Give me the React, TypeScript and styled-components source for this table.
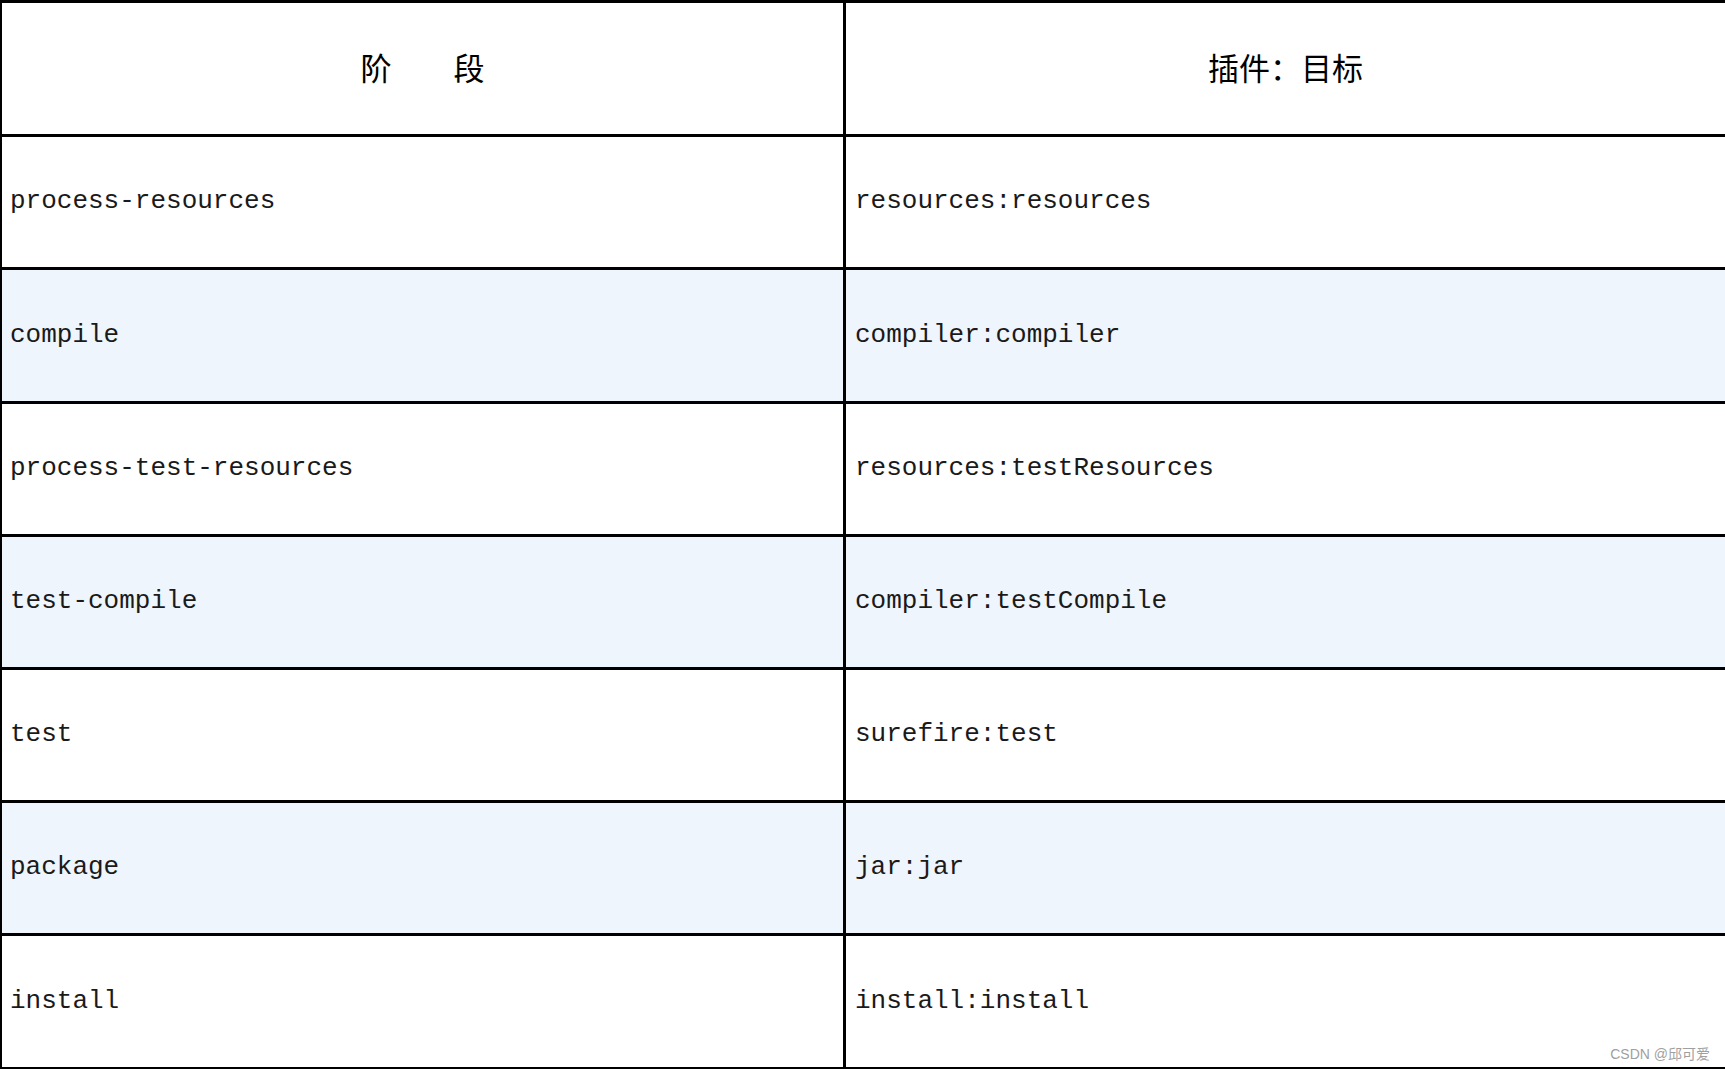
import React from 'react';
import styled, { createGlobalStyle } from 'styled-components';

const GlobalStyle = createGlobalStyle`
  html, body {
    margin: 0;
    padding: 0;
    background: #ffffff;
    overflow: hidden;
  }
`;

interface Phase {
  phase: string;
  goal: string;
}

const phases: Phase[] = [
  { phase: 'process-resources', goal: 'resources:resources' },
  { phase: 'compile', goal: 'compiler:compiler' },
  { phase: 'process-test-resources', goal: 'resources:testResources' },
  { phase: 'test-compile', goal: 'compiler:testCompile' },
  { phase: 'test', goal: 'surefire:test' },
  { phase: 'package', goal: 'jar:jar' },
  { phase: 'install', goal: 'install:install' },
];

const App: React.FC = () => {
  return (
    <>
      <GlobalStyle />
      <Page>
        <Table>
          <Row>
            <HeadCell>阶　　段</HeadCell>
            <HeadCell>插件：目标</HeadCell>
          </Row>
          {phases.map((p, i) => (
            <Row key={p.phase} shaded={i % 2 === 1} last={i === phases.length - 1}>
              <Cell indent={8}>{p.phase}</Cell>
              <Cell indent={9}>{p.goal}</Cell>
            </Row>
          ))}
        </Table>
        <Watermark>CSDN @邱可爱</Watermark>
      </Page>
    </>
  );
};

const Page = styled.div`
  position: relative;
  width: 100vw;
  height: 100vh;
`;

const Table = styled.div`
  box-sizing: border-box;
  display: grid;
  grid-template-rows: 134px 133px 134px 133px 133px 133px 133px 1fr;
  width: 100%;
  height: 100%;
  border-top: 3px solid #000;
  border-left: 2px solid #000;
  border-bottom: 2px solid #000;
`;

const Row = styled.div<{ shaded?: boolean; last?: boolean }>`
  display: grid;
  grid-template-columns: 844px 1fr;
  background: ${(props) => (props.shaded ? '#eff5fc' : '#ffffff')};
  border-bottom: ${(props) => (props.last ? 'none' : '3px solid #000')};
  min-height: 0;

  & > div:first-child {
    border-right: 3px solid #000;
  }
`;

const HeadCell = styled.div`
  display: flex;
  align-items: center;
  justify-content: center;
  padding-bottom: 4px;
  font-family: "Noto Sans CJK SC", "Liberation Serif", serif;
  font-size: 31px;
  color: #000;
`;

const Cell = styled.div<{ indent: number }>`
  display: flex;
  align-items: center;
  padding-left: ${(props) => props.indent}px;
  padding-bottom: 2px;
  font-family: "Liberation Mono", "Courier New", monospace;
  font-size: 26px;
  color: #1a1a1a;
  white-space: pre;
`;

const Watermark = styled.div`
  position: absolute;
  right: 15px;
  bottom: 6px;
  font-family: "Liberation Sans", "Noto Sans CJK SC", sans-serif;
  font-size: 14px;
  color: #a0a0a0;
`;

export default App;
